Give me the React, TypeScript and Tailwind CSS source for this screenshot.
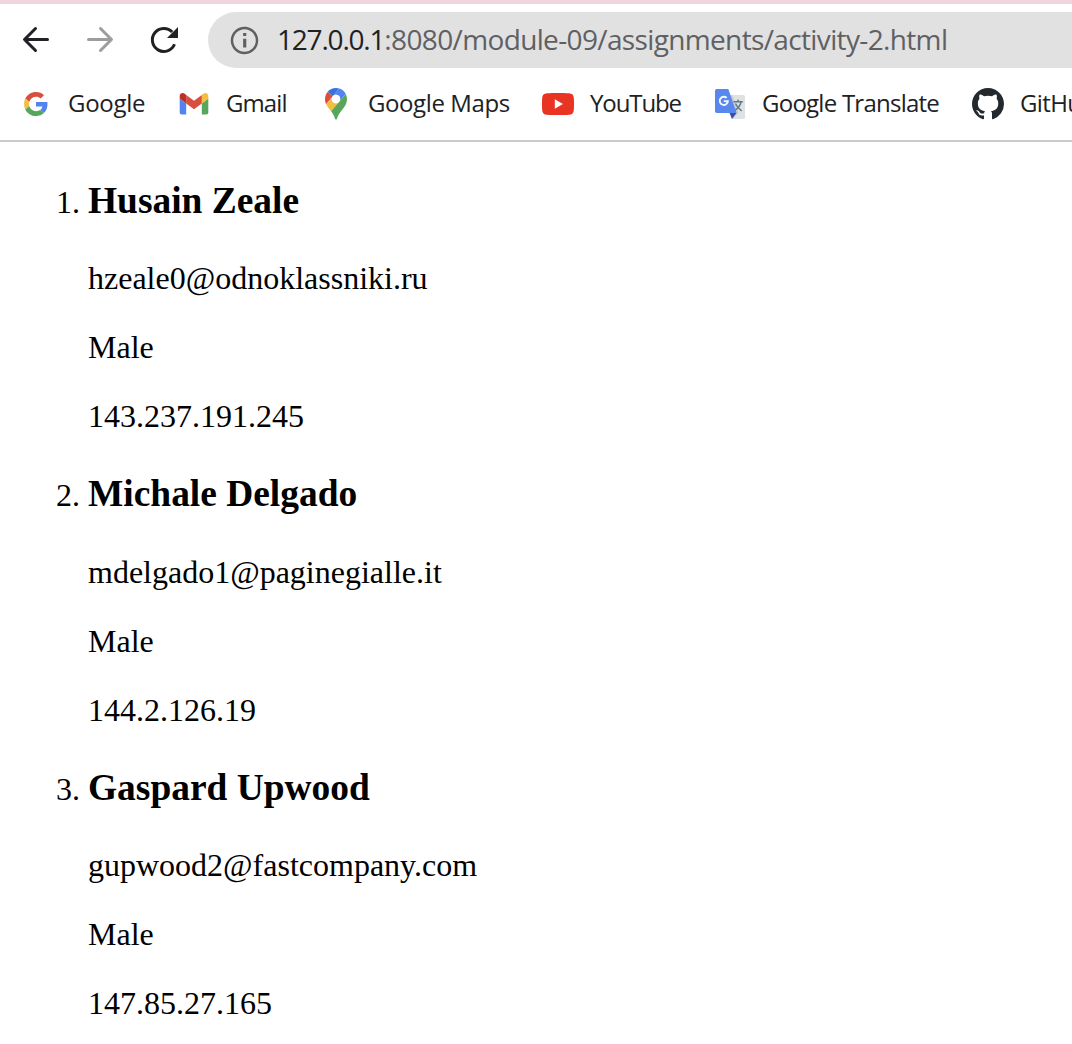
import React from "react";

const people = [
  { name: "Husain Zeale", email: "hzeale0@odnoklassniki.ru", gender: "Male", ip: "143.237.191.245" },
  { name: "Michale Delgado", email: "mdelgado1@paginegialle.it", gender: "Male", ip: "144.2.126.19" },
  { name: "Gaspard Upwood", email: "gupwood2@fastcompany.com", gender: "Male", ip: "147.85.27.165" },
];

function GoogleIcon() {
  return (
    <svg className="h-8 w-8 shrink-0" viewBox="0 0 32 32">
      <g transform="translate(4 4) scale(0.5)">
        <path fill="#d94f3d" d="M24 9.5c3.54 0 6.71 1.22 9.21 3.6l6.85-6.85C35.9 2.38 30.47 0 24 0 14.62 0 6.51 5.38 2.56 13.22l7.98 6.19C12.43 13.72 17.74 9.5 24 9.5z" />
        <path fill="#5184ee" d="M46.98 24.55c0-1.57-.15-3.09-.38-4.55H24v9.02h12.94c-.58 2.96-2.26 5.48-4.78 7.18l7.73 6c4.51-4.18 7.09-10.36 7.09-17.65z" />
        <path fill="#f2bf42" d="M10.53 28.59c-.48-1.45-.76-2.99-.76-4.59s.27-3.14.76-4.59l-7.98-6.19C.92 16.46 0 20.12 0 24c0 3.88.92 7.54 2.56 10.78l7.97-6.19z" />
        <path fill="#58a55c" d="M24 48c6.48 0 11.93-2.13 15.89-5.81l-7.73-6c-2.15 1.45-4.92 2.3-8.16 2.3-6.26 0-11.57-4.22-13.47-9.91l-7.98 6.19C6.51 42.62 14.62 48 24 48z" />
      </g>
    </svg>
  );
}

function GmailIcon() {
  return (
    <svg className="h-8 w-8 shrink-0" viewBox="0 0 32 32">
      <g transform="translate(1.7 5) scale(0.325)">
        <path fill="#5184ee" d="M6 66h14V32L0 17v43c0 3.32 2.69 6 6 6z" />
        <path fill="#58a55c" d="M68 66h14c3.32 0 6-2.69 6-6V17L68 32z" />
        <path fill="#f2bf42" d="M68 6v26l20-15V9c0-7.42-8.47-11.65-14.4-7.2z" />
        <path fill="#d94f3d" d="M20 32V6l24 18L68 6v26L44 50z" />
        <path fill="#b83228" d="M0 9v8l20 15V6l-5.6-4.2C8.46-2.65 0 1.58 0 9z" />
      </g>
    </svg>
  );
}

function MapsIcon() {
  return (
    <svg className="h-8 w-8 shrink-0" viewBox="0 0 32 32">
      <g transform="translate(5 0) scale(0.238)">
        <path fill="#3871e0" d="M60.2 2.2C55.8.8 51 0 46.1 0 32 0 19.3 6.4 10.8 16.5l21.8 18.3L60.2 2.2z" />
        <path fill="#d94f3d" d="M10.8 16.5C4.1 24.5 0 34.9 0 46.1c0 8.7 1.7 15.7 4.6 22l28-33.3-21.8-18.3z" />
        <path fill="#5184ee" d="M46.2 28.5c9.8 0 17.7 7.9 17.7 17.7 0 4.3-1.6 8.3-4.2 11.4 0 0 13.9-16.6 27.5-32.7-5.6-10.8-15.3-19-27-22.7L32.6 34.8c3.3-3.8 8.1-6.3 13.6-6.3" />
        <path fill="#f2bf42" d="M46.2 63.8c-9.8 0-17.7-7.9-17.7-17.7 0-4.3 1.5-8.3 4.1-11.3l-28 33.3c4.8 10.6 12.8 19.2 21 29.9l34.1-40.5c-3.3 3.9-8.1 6.3-13.5 6.3" />
        <path fill="#58a55c" d="M59.1 109.2c15.4-24.1 33.3-35 33.3-63 0-7.7-1.9-14.9-5.2-21.3L25.6 98c2.6 3.4 5.3 7.3 7.9 11.3 9.4 14.5 6.8 23.1 12.8 23.1s3.4-8.7 12.8-23.2" />
        <circle cx="46.200" cy="46.200" r="17.700" fill="#fff" />
      </g>
    </svg>
  );
}

function YouTubeIcon() {
  return (
    <svg className="h-8 w-8 shrink-0" viewBox="0 0 32 32">
      <path fill="#e93323" d="M5 5.2C11 4.8 21 4.8 27 5.2c3.300.2 4.600 1.700 4.800 4.800.3 4 .3 8 0 12-.2 3.100-1.500 4.600-4.800 4.800-6 .4-16 .4-22 0-3.300-.2-4.600-1.700-4.800-4.800-.3-4-.3-8 0-12C.4 6.900 1.700 5.400 5 5.200z" />
      <path fill="#fff" d="M12.800 11.200v9.600l8.200-4.800z" />
    </svg>
  );
}

function TranslateIcon() {
  return (
    <svg className="h-8 w-8 shrink-0" viewBox="0 0 32 32">
      <path fill="#dfe1e3" d="M12 7h17.500Q31 7 31 8.500v21q0 1.500-1.500 1.500H18z" />
      <path fill="#c8cbd0" d="M15.500 7h2.800l6.200 18-6.500 6z" />
      <path d="M19.500 13.700h9.300M24 11.500v2.200M27 14c-.8 3.700-3.200 6.600-6.400 8.600M21.500 15.500c1.300 3.200 3.400 5.600 6.200 7.300" fill="none" stroke="#607986" strokeWidth="1.400" />
      <path fill="#3c4caa" d="M15.500 25h7L18 31z" />
      <path fill="#5887ed" d="M2.700 1h11.600L22.500 25H2.700Q1 25 1 23.300V2.700Q1 1 2.700 1z" />
      <path d="M12.700 9.900a4.100 4.100 0 1 0 1.200 3.200H9.800" fill="none" stroke="#f4f7fe" strokeWidth="1.900" />
    </svg>
  );
}

function GitHubIcon() {
  return (
    <svg className="h-8 w-8 shrink-0" viewBox="0 0 16 16" fill="#24292e">
      <path d="M8 0C3.58 0 0 3.58 0 8c0 3.54 2.29 6.53 5.47 7.59.4.07.55-.17.55-.38 0-.19-.01-.82-.01-1.49-2.01.37-2.53-.49-2.69-.94-.09-.23-.48-.94-.82-1.13-.28-.15-.68-.52-.01-.53.63-.01 1.08.58 1.23.82.72 1.21 1.87.87 2.33.66.07-.52.28-.87.51-1.07-1.78-.2-3.64-.89-3.64-3.95 0-.87.31-1.59.82-2.15-.08-.2-.36-1.02.08-2.12 0 0 .67-.21 2.2.82.64-.18 1.32-.27 2-.27.68 0 1.36.09 2 .27 1.53-1.04 2.2-.82 2.2-.82.44 1.1.16 1.92.08 2.12.51.56.82 1.27.82 2.15 0 3.07-1.87 3.75-3.65 3.95.29.25.54.73.54 1.48 0 1.07-.01 1.93-.01 2.2 0 .21.15.46.55.38A8.013 8.013 0 0016 8c0-4.42-3.58-8-8-8z" />
    </svg>
  );
}

const bookmarks = [
  { label: "Google", Icon: GoogleIcon, box: "w-[126px] mr-8", text: "tracking-[-0.3px]" },
  { label: "Gmail", Icon: GmailIcon, box: "w-[110px] mr-8", text: "tracking-[-0.9px]" },
  { label: "Google Maps", Icon: MapsIcon, box: "w-[190px] mr-8", text: "tracking-[-0.4px]" },
  { label: "YouTube", Icon: YouTubeIcon, box: "w-[140px] mr-8", text: "tracking-[-1.1px]" },
  { label: "Google Translate", Icon: TranslateIcon, box: "w-[226px] mr-8", text: "tracking-[-0.75px]" },
  { label: "GitHub", Icon: GitHubIcon, box: "w-[130px]", text: "tracking-[-0.6px]" },
];

export default function App() {
  return (
    <div className="h-[1044px] w-[1072px] overflow-hidden bg-white">
      <header className="h-[142px] overflow-hidden border-t-4 border-b-2 border-t-[#f0d5e1] border-b-[#cbcbcb] font-['Open_Sans',sans-serif]">
        <div className="flex h-[72px] items-center pl-5">
          <nav className="flex gap-8">
            <svg className="h-8 w-8" viewBox="0 0 32 32" fill="none" stroke="#202124" strokeWidth="3" strokeLinecap="round" strokeLinejoin="round">
              <path d="M27.500 15.500H4.800M15.500 4.500l-11 11 11 11" />
            </svg>
            <svg className="h-8 w-8" viewBox="0 0 32 32" fill="none" stroke="#9d9d9e" strokeWidth="3" strokeLinecap="round" strokeLinejoin="round">
              <path d="M4.500 15.500h22.700M16.500 4.500l11 11-11 11" />
            </svg>
            <svg className="h-8 w-8" viewBox="0 0 32 32">
              <path d="M26.500 20.300A11.500 11.500 0 1 1 24.200 8" fill="none" stroke="#202124" strokeWidth="3" />
              <path d="M30 3v11H19z" fill="#202124" />
            </svg>
          </nav>
          <div className="ml-7 flex h-14 flex-1 items-center overflow-hidden rounded-l-full bg-[#e1e1e1] pl-5">
            <svg className="h-[33px] w-[33px] shrink-0" viewBox="0 0 24 24" fill="#5f6064">
              <path d="M11 6.500h2.300v2.300H11zm0 4.300h2.300V17H11zm1-8.800C6.480 2 2 6.480 2 12s4.480 10 10 10 10-4.480 10-10S17.520 2 12 2zm0 18.200c-4.520 0-8.200-3.680-8.200-8.200S7.480 3.800 12 3.800s8.200 3.680 8.200 8.200-3.680 8.200-8.200 8.200z" />
            </svg>
            <p className="ml-4 pb-0.5 text-[28px] leading-[38px] tracking-[-0.64px] whitespace-nowrap text-[#5f6063]">
              <span className="tracking-[-1.2px] text-[#202124]">127.0.0.1</span>:8080/module-09/assignments/activity-2.html
            </p>
          </div>
        </div>
        <div className="flex h-14 items-center pl-5">
          {bookmarks.map(({ label, Icon, box, text }) => (
            <a key={label} className={`flex shrink-0 items-center gap-4 text-2xl whitespace-nowrap text-[#202124] ${box}`}>
              <Icon />
              <span className={`pb-0.5 leading-[30px] ${text}`}>{label}</span>
            </a>
          ))}
        </div>
      </header>
      <ol className="list-decimal pt-[36.9px] pl-[88px] font-['Liberation_Serif',serif] text-[32px] leading-[37px] text-black">
        {people.map((p) => (
          <li key={p.name} className="mb-[37.2px]">
            <h3 className="mb-[37.8px] text-[37.44px] leading-[43.5px] font-bold">{p.name}</h3>
            <p className="mb-8">{p.email}</p>
            <p className="mb-8">{p.gender}</p>
            <p>{p.ip}</p>
          </li>
        ))}
      </ol>
    </div>
  );
}
